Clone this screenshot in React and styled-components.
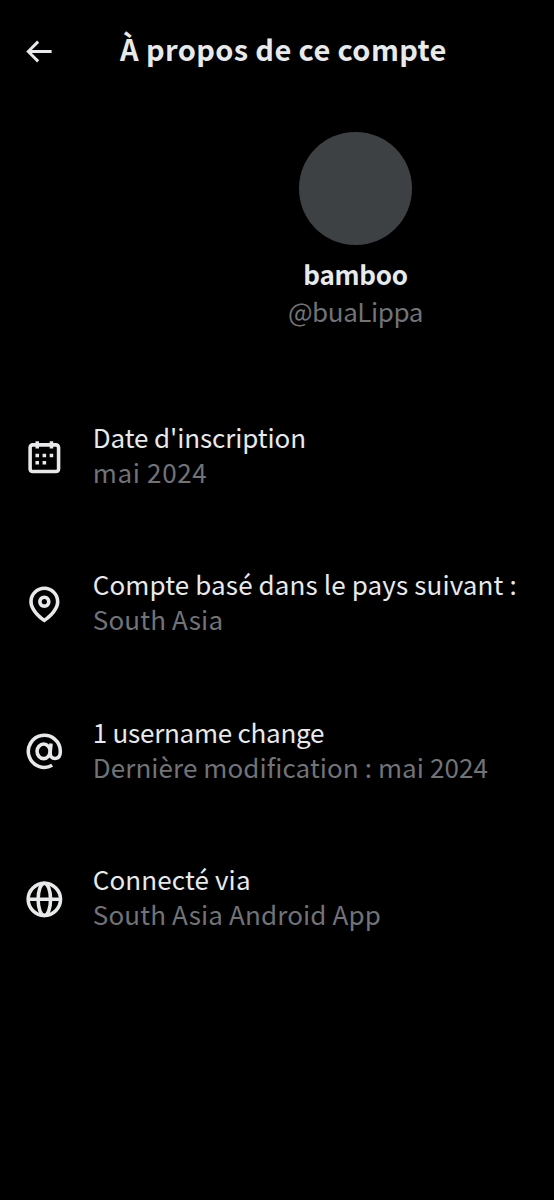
import React from 'react';
import styled, { createGlobalStyle } from 'styled-components';

const GlobalStyle = createGlobalStyle`
  *{
    box-sizing: border-box;
  }
  body{
    margin: 0;
    background-color: #000;
    font-family: 'Noto Sans CJK SC', 'Noto Sans', sans-serif;
  }
`

const ArrowIcon = () => (
  <svg viewBox="0 0 24 24" fill="currentColor">
    <path d="M7.414 13l5.043 5.04-1.414 1.42L3.586 12l7.457-7.46 1.414 1.42L7.414 11H21v2H7.414z" />
  </svg>
)

const CalendarIcon = () => (
  <svg viewBox="0 0 24 24" fill="currentColor">
    <path d="M7 4V3h2v1h6V3h2v1h1.5C19.89 4 21 5.12 21 6.5v12c0 1.38-1.11 2.5-2.5 2.5h-13C4.12 21 3 19.88 3 18.5v-12C3 5.12 4.12 4 5.5 4H7zm0 2H5.5c-.27 0-.5.22-.5.5v12c0 .28.23.5.5.5h13c.28 0 .5-.22.5-.5v-12c0-.28-.22-.5-.5-.5H17v1h-2V6H9v1H7V6zm0 6h2v-2H7v2zm0 4h2v-2H7v2zm4-4h2v-2h-2v2zm0 4h2v-2h-2v2zm4-4h2v-2h-2v2z" />
  </svg>
)

const PinIcon = () => (
  <svg viewBox="0 0 24 24" fill="currentColor">
    <path d="M12 7c-1.93 0-3.5 1.57-3.5 3.5S10.07 14 12 14s3.5-1.57 3.5-3.5S13.93 7 12 7zm0 5c-.827 0-1.5-.673-1.5-1.5S11.173 9 12 9s1.5.673 1.5 1.5S12.827 12 12 12zm0-10c-4.687 0-8.5 3.813-8.5 8.5 0 5.967 7.621 11.116 7.945 11.332l.555.37.555-.37c.324-.216 7.945-5.365 7.945-11.332C20.5 5.813 16.687 2 12 2zm0 17.77c-1.665-1.241-6.5-5.196-6.5-9.27C5.5 6.916 8.416 4 12 4s6.5 2.916 6.5 6.5c0 4.073-4.835 8.028-6.5 9.27z" />
  </svg>
)

const AtIcon = () => (
  <svg viewBox="0 0 24 24" fill="none" stroke="currentColor" strokeWidth="2">
    <path d="M16.4 19.85A9 9 0 1 1 21 12c0 2.5-.8 4-2.8 4-2.1 0-3.1-1.3-2.9-3.6l.45-4.8" />
    <ellipse cx="11.6" cy="12" rx="3.7" ry="4.1" />
  </svg>
)

const GlobeIcon = () => (
  <svg viewBox="0 0 24 24" fill="none" stroke="currentColor" strokeWidth="2">
    <circle cx="12" cy="12" r="9.1" />
    <ellipse cx="12" cy="12" rx="3.5" ry="9.1" />
    <path d="M3 12h18" />
  </svg>
)

const infos = [
  { icon: <CalendarIcon />, label: "Date d'inscription", labelSpacing: -0.1, value: 'mai 2024', valueSpacing: 0.65 },
  { icon: <PinIcon />, label: 'Compte basé dans le pays suivant :', labelSpacing: 0.12, value: 'South Asia', valueSpacing: 0.15 },
  { icon: <AtIcon />, label: '1 username change', labelSpacing: -0.25, value: 'Dernière modification : mai 2024', valueSpacing: 0.08 },
  { icon: <GlobeIcon />, label: 'Connecté via', labelSpacing: 0.12, value: 'South Asia Android App', valueSpacing: 0.14 },
]

export default function App() {
  return (
    <Screen>
      <GlobalStyle />
      <Header>
        <BackButton aria-label="Retour">
          <ArrowIcon />
        </BackButton>
        <Title>À propos de ce compte</Title>
      </Header>

      <Profile>
        <Avatar />
        <Name>bamboo</Name>
        <Handle>@buaLippa</Handle>
      </Profile>

      <InfoList>
        {infos.map((info) => (
          <InfoRow key={info.label}>
            <IconBox>{info.icon}</IconBox>
            <div>
              <Label $spacing={info.labelSpacing}>{info.label}</Label>
              <Value $spacing={info.valueSpacing}>{info.value}</Value>
            </div>
          </InfoRow>
        ))}
      </InfoList>
    </Screen>
  )
}

const Screen = styled.div`
  min-height: 1200px;
  background-color: #000;
  color: #e7e9ea;
  overflow: hidden;
`

const Header = styled.header`
  display: flex;
  align-items: center;
  height: 102px;
  padding-left: 21px;
`

const BackButton = styled.button`
  display: flex;
  width: 35px;
  height: 35px;
  padding: 0;
  border: none;
  background: none;
  color: #e7e9ea;
  svg{
    width: 100%;
    height: 100%;
  }
`

const Title = styled.h1`
  margin: 0 0 7px 64px;
  font-size: 29px;
  line-height: 40px;
  font-weight: bold;
  letter-spacing: 0.38px;
  white-space: nowrap;
`

const Profile = styled.section`
  display: flex;
  flex-direction: column;
  align-items: center;
  padding: 30px 0 0 157px;
`

const Avatar = styled.div`
  width: 112.5px;
  height: 112.5px;
  border-radius: 50%;
  background-color: #3e4144;
`

const Name = styled.div`
  margin-top: 10.5px;
  font-size: 26px;
  line-height: 37px;
  font-weight: bold;
  letter-spacing: -0.3px;
`

const Handle = styled.div`
  font-size: 26px;
  line-height: 37px;
  letter-spacing: -0.4px;
  color: #717377;
`

const InfoList = styled.ul`
  display: flex;
  flex-direction: column;
  gap: 77.3px;
  margin: 90px 0 0;
  padding: 0 0 0 22.6px;
  list-style: none;
`

const InfoRow = styled.li`
  display: flex;
  align-items: center;
  gap: 27.5px;
  height: 70px;
`

const IconBox = styled.div`
  display: flex;
  flex: none;
  width: 42.7px;
  height: 42.7px;
  margin-top: 6.4px;
  svg{
    width: 100%;
    height: 100%;
  }
`

const Label = styled.div`
  font-size: 26px;
  line-height: 35px;
  white-space: nowrap;
  letter-spacing: ${({ $spacing }) => $spacing || 0}px;
`

const Value = styled(Label)`
  color: #717377;
`
